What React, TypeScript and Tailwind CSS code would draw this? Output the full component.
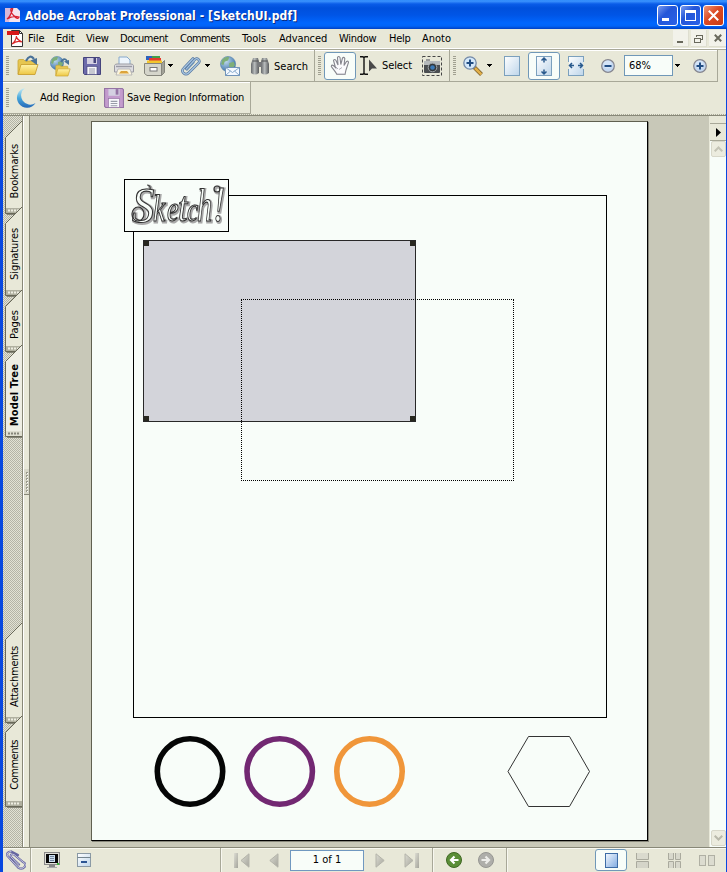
import React from "react";

function Grip() {
  return (
    <svg className="ml-[3px] h-[19px] w-[3px] shrink-0" viewBox="0 0 3 19">
      {[0, 2, 4, 6, 8, 10, 12, 14, 16, 18].map((y) => (
        <rect key={y} x="0" y={y} width="3" height="1" fill="#a09f90" />
      ))}
    </svg>
  );
}

function Down({ className }: { className: string }) {
  return (
    <svg className={"h-[3px] w-[5px] shrink-0 " + className} viewBox="0 0 5 3" shapeRendering="crispEdges">
      <path d="M0 0h5v1h-1v1h-1v1h-1v-1h-1v-1h-1z" fill="#000" />
    </svg>
  );
}

function Folder() {
  return (
    <g>
      <path d="M1 19V6q0-1.500 1.500-1.500h4L8 6h9q1 0 1 1v3" fill="#e6c650" stroke="#c9a436" strokeWidth="0.8" />
      <path d="M1 19.500L4 9.500h17l-3 10z" fill="url(#fold)" stroke="#c9a032" strokeWidth="0.9" />
    </g>
  );
}

function Globe({ x, y }: { x: number; y: number }) {
  return (
    <g transform={`translate(${x} ${y})`}>
      <circle cx="7" cy="7" r="6.600" fill="url(#globe)" stroke="#5d88ad" strokeWidth="0.6" />
      <path d="M2 3q3-3 6-2l-1 3-3 1-1 3-2-1zM8 6l4-1 1 3-3 4-2-2z" fill="#7eae78" />
    </g>
  );
}

function Clip({ className }: { className: string }) {
  return (
    <svg className={"shrink-0 " + className} viewBox="0 0 20 20" fill="none" strokeLinecap="round">
      <path d="M5.500 13L13.500 4Q15.500 1.500 17.500 3.500T17 7.500L7.500 17Q5 19.500 2.500 17T3 12L12 2.500" stroke="#5778a0" strokeWidth="2.600" />
      <path d="M5.500 13L13.500 4Q15.500 1.500 17.500 3.500T17 7.500L7.500 17Q5 19.500 2.500 17T3 12L12 2.500" stroke="#a9c6e2" strokeWidth="1.200" />
      <path d="M6 14L13 6.500" stroke="#6f93b8" strokeWidth="1.400" />
    </svg>
  );
}

function Floppy({ className, body, edge }: { className: string; body: string; edge: string }) {
  return (
    <svg className={"shrink-0 " + className} viewBox="0 0 18 18">
      <path d="M.5.5h16l1 1v16H1.500l-1-1z" fill={body} stroke={edge} />
      <rect x="4" y="1" width="10" height="6" fill="#d4d0e2" />
      <rect x="10.500" y="1" width="2.500" height="5" fill={edge} />
      <rect x="4" y="9.500" width="10" height="8" fill="#f7f7fb" stroke={edge} strokeWidth="0.6" />
      <path d="M6 12h6M6 14h6M6 16h6" stroke="#989ba8" />
    </svg>
  );
}

function ZoomKnob({ plus, className }: { plus?: boolean; className: string }) {
  return (
    <svg className={"h-[14px] w-[14px] shrink-0 " + className} viewBox="0 0 14 14">
      <circle cx="7" cy="7" r="6.300" fill="#c4d8f0" stroke="#85858e" strokeWidth="1.200" />
      <circle cx="6.500" cy="5.500" r="4" fill="#dceafa" opacity="0.7" />
      <path d={plus ? "M3.500 7h7M7 3.500v7" : "M3.500 7h7"} stroke="#214d83" strokeWidth="2" />
    </svg>
  );
}

function PageSheet({ children, className }: { children?: React.ReactNode; className?: string }) {
  return (
    <svg className={"h-[20px] w-[16px] shrink-0 " + (className ?? "")} viewBox="0 0 16 20">
      <rect x=".5" y=".5" width="15" height="19" fill="url(#sheet)" stroke="#7ba0bd" />
      {children}
    </svg>
  );
}

function Defs() {
  return (
    <svg className="absolute h-0 w-0">
      <defs>
        <linearGradient id="fold" x1="0" y1="0" x2="0" y2="1">
          <stop offset="0" stopColor="#fff3a8" />
          <stop offset="1" stopColor="#edc743" />
        </linearGradient>
        <radialGradient id="globe" cx=".35" cy=".3" r=".8">
          <stop offset="0" stopColor="#c2dced" />
          <stop offset="1" stopColor="#2b66a4" />
        </radialGradient>
        <linearGradient id="sheet" x1="0" y1="0" x2="1" y2="1">
          <stop offset="0" stopColor="#ffffff" />
          <stop offset="1" stopColor="#bdd5ea" />
        </linearGradient>
        <linearGradient id="sheetBlue" x1="0" y1="0" x2="1" y2="1">
          <stop offset="0" stopColor="#f4f9ff" />
          <stop offset="1" stopColor="#7faae0" />
        </linearGradient>
        <linearGradient id="moon" x1="0" y1="0" x2="0" y2="1">
          <stop offset="0" stopColor="#c8ecf4" />
          <stop offset=".5" stopColor="#48a8dc" />
          <stop offset="1" stopColor="#2468b8" />
        </linearGradient>
        <linearGradient id="gray" x1="0" y1="0" x2="1" y2="1">
          <stop offset="0" stopColor="#dcdcd2" />
          <stop offset="1" stopColor="#a5a59c" />
        </linearGradient>
        <linearGradient id="bino" x1="0" y1="0" x2="1" y2="0">
          <stop offset="0" stopColor="#66696b" />
          <stop offset=".45" stopColor="#b8bcbc" />
          <stop offset="1" stopColor="#5a5c5e" />
        </linearGradient>
      </defs>
    </svg>
  );
}

function TitleBar() {
  return (
    <div className="flex h-[29px] shrink-0 items-center bg-[linear-gradient(180deg,#2a86f8_0px,#3d95ff_1px,#0a5ce8_4px,#0050dc_8px,#0055e6_15px,#0066fe_23px,#0064f8_26px,#0040c4_29px)] pr-[3px]">
      <svg className="ml-[5px] h-[14px] w-[15px]" viewBox="0 0 15 14">
        <path d="M0 0h12l3 3v11H0z" fill="#f5e4ee" />
        <path d="M0 0h7L4 14H0z" fill="#d8b8d8" />
        <path d="M2 11Q5 9 7 3T6 1Q5 4 9 8T14 9Q8 7 2 11" fill="none" stroke="#d82030" strokeWidth="1.300" />
      </svg>
      <h1 className="ml-[5px] mt-[3px] w-[276px] whitespace-nowrap font-['DejaVu_Sans_Condensed','DejaVu_Sans',sans-serif] text-[12px] font-bold tracking-[0.07px] text-white [font-stretch:condensed] [text-shadow:1px_1px_0_#0a2a80]">
        Adobe Acrobat Professional - [SketchUI.pdf]
      </h1>
      <div className="ml-auto mt-[2px] flex gap-[2px]">
        <div className="h-[21px] w-[21px] rounded-[3px] border border-white bg-[linear-gradient(135deg,#7a9cf0,#2456d8_40%,#2a62e8)]">
          <div className="ml-[4px] mt-[12px] h-[3px] w-[7px] bg-white" />
        </div>
        <div className="h-[21px] w-[21px] rounded-[3px] border border-white bg-[linear-gradient(135deg,#7a9cf0,#2456d8_40%,#2a62e8)]">
          <div className="ml-[4px] mt-[4px] h-[11px] w-[11px] border border-t-[3px] border-white" />
        </div>
        <div className="flex h-[21px] w-[21px] items-center justify-center rounded-[3px] border border-white bg-[linear-gradient(135deg,#f09878,#dc4a24_45%,#c83c14)]">
          <svg className="h-[11px] w-[11px]" viewBox="0 0 11 11">
            <path d="M.8.8l9.400 9.400M10.200.8L.8 10.200" stroke="#fff" strokeWidth="2" />
          </svg>
        </div>
      </div>
    </div>
  );
}

const MENUS: [string, string][] = [
  ["File", "w-[28px]"],
  ["Edit", "w-[30px] tracking-[-0.2px]"],
  ["View", "w-[34px] tracking-[-0.2px]"],
  ["Document", "w-[60px] tracking-[-0.4px]"],
  ["Comments", "w-[62px] tracking-[-0.5px]"],
  ["Tools", "w-[37px]"],
  ["Advanced", "w-[60px] tracking-[-0.1px]"],
  ["Window", "w-[50px] tracking-[-0.3px]"],
  ["Help", "w-[33px] tracking-[-0.3px]"],
  ["Anoto", "w-[40px]"],
];

function MenuBar() {
  return (
    <div className="flex h-[19px] shrink-0 items-center">
      <svg className="ml-[4px] h-[17px] w-[17px] shrink-0" viewBox="0 0 17 17">
        <path d="M4.500.5h8l3 3v13h-11z" fill="#fff" stroke="#333" />
        <path d="M12.500.5v3h3" fill="none" stroke="#333" />
        <rect x="0" y="1" width="12" height="4" fill="#d81818" />
        <path d="M5 14Q9 11 9.500 6Q9 9 15 12Q10 10 5 14" fill="none" stroke="#d82828" strokeWidth="1.200" />
      </svg>
      <div className="ml-[4px] flex">
        {MENUS.map(([m, w]) => (
          <span key={m} className={"whitespace-nowrap " + w}>{m}</span>
        ))}
      </div>
      <div className="ml-auto flex gap-[2px]">
        <div className="h-[17px] w-[16px] border-b border-r border-[#deded0] bg-[#f2f2ea] pl-[4px] pt-[11px]">
          <div className="h-[2px] w-[6px] bg-[#68685c]" />
        </div>
        <div className="flex h-[17px] w-[16px] items-center justify-center border-b border-r border-[#deded0] bg-[#f2f2ea]">
          <svg className="h-[9px] w-[9px]" viewBox="0 0 9 9" fill="none" stroke="#68685c" shapeRendering="crispEdges">
            <path d="M2 1h7M2.500 1v2M8.500 1v5M6 5.500h3" strokeWidth="1" />
            <path d="M0 4h6.500M.5 4v5M6 4v5M0 8.500h6.500" />
          </svg>
        </div>
        <div className="flex h-[17px] w-[17px] items-center justify-center border-b border-[#deded0] bg-[#f2f2ea]">
          <svg className="h-[8px] w-[8px]" viewBox="0 0 8 8">
            <path d="M.8.8l6.400 6.400M7.200.8L.8 7.200" stroke="#68685c" strokeWidth="2" />
          </svg>
        </div>
      </div>
    </div>
  );
}

function MainToolbar() {
  const dock = "flex h-[32px] shrink-0 items-center border-b border-r border-[#a8a898] shadow-[inset_0_1px_0_#fff] ";
  return (
    <div className="flex shrink-0">
      <div className={dock + "w-[312px]"}>
        <Grip />
        <svg className="ml-[8px] h-[22px] w-[22px] shrink-0" viewBox="0 0 22 22">
          <Folder />
          <path d="M9 6Q13-1.500 17 4" fill="none" stroke="#4a7298" strokeWidth="2.200" />
          <path d="M13.500 5.500L20 3v7z" fill="#4a7298" />
        </svg>
        <svg className="ml-[11px] h-[22px] w-[21px] shrink-0" viewBox="0 0 21 22">
          <Globe x={0} y={1} />
          <g transform="translate(5 7) scale(.72)"><Folder /></g>
          <path d="M11 7Q14 2 17 6" fill="none" stroke="#4a7298" strokeWidth="1.800" />
          <path d="M14 6.500L19 5v5z" fill="#4a7298" />
        </svg>
        <Floppy className="ml-[12px] h-[18px] w-[18px]" body="#6d6baa" edge="#45447c" />
        <svg className="ml-[13px] h-[20px] w-[20px] shrink-0" viewBox="0 0 20 20">
          <path d="M5 10V1h8l3 3v6z" fill="#eef5fc" stroke="#86a9cc" />
          <path d="M.5 9.500Q1 8 3 8h14q2 0 2.500 1.500V16H.5z" fill="#dcdce0" stroke="#9a9aa2" />
          <path d="M2 10.500h16" stroke="#9a9aa4" strokeWidth="1.400" />
          <path d="M4 13h12l2 6H2z" fill="#faf5dd" stroke="#a8a8ac" strokeWidth=".7" />
          <path d="M5 17.500l2-2.500h6l2 2.500z" fill="#dca43a" />
        </svg>
        <svg className="ml-[10px] h-[20px] w-[21px] shrink-0" viewBox="0 0 21 20">
          <rect x="2" y="0" width="6" height="4" fill="#2d62bd" />
          <rect x="8" y="0" width="8" height="4" fill="#43a047" />
          <rect x="5" y="2" width="12" height="3" fill="#e33b2e" />
          <rect x="3" y="4.500" width="15" height="3" fill="#f2c62e" />
          <path d="M.5 7.500h17v12H3l-2.500-2z" fill="#d5d5cb" stroke="#85857c" />
          <path d="M17.500 7.500l3-3v12l-3 3z" fill="#a2a298" stroke="#85857c" />
          <rect x="6" y="11.500" width="7" height="3.500" fill="#fff" stroke="#777" />
        </svg>
        <Down className="ml-[3px]" />
        <Clip className="ml-[8px] h-[20px] w-[20px]" />
        <Down className="ml-[4px]" />
        <svg className="ml-[10px] h-[20px] w-[20px] shrink-0" viewBox="0 0 20 20">
          <g transform="scale(1.15)"><Globe x={0} y={0} /></g>
          <rect x="5.500" y="11.500" width="14" height="8" fill="#f4f9ff" stroke="#7193b8" />
          <path d="M5.500 11.500l7 5 7-5M5.500 19.500l5-4.500M19.500 19.500l-5-4.500" fill="none" stroke="#86a9cc" />
        </svg>
        <svg className="ml-[11px] h-[18px] w-[18px] shrink-0" viewBox="0 0 18 18">
          <path d="M2 1h5l1 4v11q-4 3-8 0V7z" fill="url(#bino)" />
          <path d="M11 1h5l2 6v9q-4 3-8 0V5z" fill="url(#bino)" />
          <rect x="7" y="5" width="4" height="5" fill="#77797b" />
          <path d="M1.500 4h6M10.500 4h6" stroke="#505253" />
        </svg>
        <span className="ml-[5px] mt-[2px]">Search</span>
      </div>
      <div className={dock + "w-[135px]"}>
        <Grip />
        <div className="ml-[3px] flex h-[28px] w-[32px] shrink-0 items-center justify-center rounded-[3px] border border-[#7098b8] bg-[#f8fdf9]">
          <svg className="h-[21px] w-[20px]" viewBox="0 0 20 21">
            <path d="M7 19.500C5 16 3 14 1.300 11.500Q1.500 9 4 11L5.500 12.500L3.500 5.500Q4.500 3.500 6 5.500L8 10L7.500 2.500Q8.500.5 10 2.500L10.800 9.500L12.500 3Q14 1.500 14.800 3.500L14 10.500L16.500 6.500Q18.500 5.500 18.500 7.500Q17 12 16 15L15 19.500z" fill="#fbfbfd" stroke="#85858d" strokeWidth="1.100" />
            <path d="M7 19h8M6 12l2 2M9 14.500l3-2" stroke="#b1b1ba" />
          </svg>
        </div>
        <svg className="ml-[4px] h-[19px] w-[17px] shrink-0" viewBox="0 0 17 19">
          <path d="M0 .8h3l1 1 1-1h3M0 18.200h3l1-1 1 1h3M4 2v15" fill="none" stroke="#111" strokeWidth="1.400" />
          <path d="M9 3.500v12l3-3h5z" fill="#484848" />
        </svg>
        <span className="ml-[5px] w-[40px] shrink-0 tracking-[-0.1px]">Select</span>
        <svg className="h-[20px] w-[20px] shrink-0" viewBox="0 0 20 20">
          <rect x=".5" y=".5" width="19" height="19" fill="none" stroke="#444" strokeDasharray="3 2" />
          <rect x="2" y="5" width="16" height="12" rx="1" fill="#4b4e51" />
          <rect x="2" y="5" width="16" height="4" fill="#b5b9bb" />
          <path d="M4 5V3h4v2" fill="#999" />
          <circle cx="10.500" cy="11.500" r="4.300" fill="#34383b" stroke="#a0a6aa" />
          <circle cx="10.500" cy="11.500" r="2.300" fill="#3b79b6" />
        </svg>
      </div>
      <div className={dock + "w-[268px]"}>
        <Grip />
        <svg className="ml-[7px] h-[20px] w-[20px] shrink-0" viewBox="0 0 20 20">
          <path d="M11 11l7.500 7.500" stroke="#7a5d28" strokeWidth="4" />
          <path d="M12 12l6.300 6.300" stroke="#e2b04a" strokeWidth="2.600" />
          <circle cx="7" cy="7" r="6.200" fill="#d4e8fa" stroke="#7489a6" strokeWidth="1.300" />
          <path d="M3.500 7h7M7 3.500v7" stroke="#214d83" strokeWidth="2" />
        </svg>
        <Down className="ml-[4px]" />
        <PageSheet className="ml-[12px]" />
        <div className="ml-[8px] flex h-[28px] w-[32px] shrink-0 items-center justify-center rounded-[3px] border border-[#7098b8] bg-[#f8fdf9]">
          <PageSheet>
            <path d="M8 1.500v5M5.500 4.500L8 2l2.500 2.500M8 18.500v-5M5.500 15.500L8 18l2.500-2.500" fill="none" stroke="#28598c" strokeWidth="1.500" />
          </PageSheet>
        </div>
        <PageSheet className="ml-[8px]">
          <rect x="0" y="6" width="1" height="7" fill="#e8e8d8" />
          <rect x="15" y="6" width="1" height="7" fill="#e8e8d8" />
          <path d="M1 9.500h5M4 7L1.500 9.500 4 12M15 9.500h-5M12 7l2.500 2.500L12 12" fill="none" stroke="#28598c" strokeWidth="1.500" />
        </PageSheet>
        <ZoomKnob className="ml-[17px]" />
        <div className="ml-[9px] flex h-[21px] w-[49px] shrink-0 items-center border border-[#7098b8] bg-[#f8fdf9] pl-[4px]">68%</div>
        <Down className="ml-[2px] mr-px" />
        <ZoomKnob plus className="ml-[12px]" />
      </div>
    </div>
  );
}

function RegionToolbar() {
  return (
    <div className="flex h-[32px] w-[248px] shrink-0 items-center border-b border-r border-[#a8a898] shadow-[inset_0_1px_0_#fff]">
      <Grip />
      <svg className="ml-[7px] h-[20px] w-[21px] shrink-0" viewBox="0 0 21 20">
        <path d="M9 0A10 10 0 1 0 19.500 15A8 8 0 0 1 9 0z" fill="url(#moon)" />
      </svg>
      <span className="ml-[3px] mt-[1px] w-[64px] shrink-0 whitespace-nowrap tracking-[-0.1px]">Add Region</span>
      <Floppy className="h-[20px] w-[20px]" body="#c39bcd" edge="#9473a4" />
      <span className="ml-[3px] mt-[1px] whitespace-nowrap tracking-[-0.2px]">Save Region Information</span>
    </div>
  );
}

function Tab({ label, h, className, textClass, front }: { label: string; h: number; className: string; textClass: string; front?: boolean }) {
  return (
    <div className={"relative flex w-[17px] shrink-0 items-end " + className}>
      <svg className="absolute left-0 top-0 h-full w-full" viewBox={`0 0 17 ${h}`}>
        <path d={`M17 0L.5 16.500V${h - 1.5}H17z`} fill={front ? "#eeeee4" : "#e8e8d8"} />
        <rect x="1" y={h - 7} width="16" height="5" fill={front ? "#deded0" : "#b0b0a0"} />
        <path d={`M3 ${h - 4.5}h12`} stroke={front ? "#85857a" : "#eeeee2"} strokeWidth="2" strokeDasharray="2 1" />
        <path d={`M17 0L.5 16.500V${h - 1.5}H17`} fill="none" stroke="#686858" />
        <path d={`M2 ${h - 0.5}H17`} stroke="#858578" />
      </svg>
      <span className={"relative ml-[3px] rotate-180 whitespace-nowrap leading-[13px] [writing-mode:vertical-rl] " + textClass}>{label}</span>
    </div>
  );
}

function SideTabs() {
  return (
    <div className="flex w-[20px] shrink-0 flex-col border-r border-[#888878] bg-[repeating-conic-gradient(#b4b4a6_0%_25%,#e2e2d4_0%_50%)] bg-size-[2px_2px] pl-[2px] pt-[5px]">
      <Tab label="Bookmarks" h={94} className="h-[94px]" textClass="mb-[17px] tracking-[-0.1px]" />
      <Tab label="Signatures" h={90} className="-mt-[8px] h-[90px]" textClass="mb-[17px] tracking-[-0.1px]" />
      <Tab label="Pages" h={63} className="-mt-[7px] h-[63px]" textClass="mb-[14px]" />
      <Tab label="Model Tree" h={93} className="-mt-[8px] h-[93px]" textClass="mb-[12px] font-bold tracking-[0.1px]" front />
      <Tab label="Attachments" h={101} className="mt-[185px] h-[101px]" textClass="mb-[17px] tracking-[-0.2px]" />
      <Tab label="Comments" h={92} className="-mt-[8px] h-[92px]" textClass="mb-[18px] tracking-[-0.5px]" />
    </div>
  );
}

function Splitter() {
  return (
    <div className="flex w-[7px] shrink-0 flex-col border-l border-r border-l-white border-r-[#888878] bg-[#e8e8d8]">
      <div className="mt-[353px] h-[26px] border-b border-[#888878] bg-[#d8d8c9] pl-[1px] pt-[3px]">
        <svg className="h-[21px] w-[4px]" viewBox="0 0 4 21">
          {[0, 3, 6, 9, 12, 15, 18].map((y) => (
            <g key={y}>
              <rect x="1" y={y} width="2" height="2" fill="#9a9a8c" />
              <rect x="2" y={y + 1} width="1" height="1" fill="#fff" />
            </g>
          ))}
        </svg>
      </div>
    </div>
  );
}

function Handle({ className }: { className: string }) {
  return <div className={"absolute h-[5px] w-[5px] bg-[#282820] " + className} />;
}

const LETTERS: [string, number, number, number, number][] = [
  ["S", 7, 42, 54, 0.9],
  ["k", 28, 41, 42, 0.72],
  ["e", 42, 41, 38, 0.75],
  ["t", 53, 41, 46, 0.8],
  ["c", 62, 41, 36, 0.75],
  ["h", 72, 41, 50, 0.66],
  ["!", 88, 41, 56, 0.7],
];

function Lettering() {
  return (
    <g fontFamily="'Liberation Serif', serif" fontStyle="italic">
      {LETTERS.map(([ch, x, y, size, sx]) => (
        <text key={x} transform={`translate(${x} ${y}) scale(${sx} 1)`} fontSize={size * 0.92}>{ch}</text>
      ))}
      <ellipse cx="13" cy="34" rx="6" ry="7" fill="none" />
      <circle cx="92" cy="9" r="3" fill="none" />
      <path d="M22 5q4 0 3 5" fill="none" />
    </g>
  );
}

function Paper() {
  return (
    <div className="relative ml-[61px] mt-[5px] h-[720px] w-[557px] shrink-0 border border-b-black border-l-[#606050] border-r-black border-t-[#606050] bg-[#f8fdf9] shadow-[1px_1px_0_#88887c]">
      <div className="absolute left-[41px] top-[73px] h-[523px] w-[474px] border border-black" />
      <div className="absolute left-[32px] top-[57px] h-[53px] w-[105px] border border-black bg-[#f8fdf9]">
        <svg className="h-full w-full overflow-visible opacity-[0.99] will-change-transform" viewBox="0 0 103 51">
          <g transform="translate(1 1)" fill="none" stroke="#a8a8a8" strokeWidth="3"><Lettering /></g>
          <g fill="#f8fdf9" stroke="#303030" strokeWidth="1.100"><Lettering /></g>
        </svg>
      </div>
      <div className="absolute left-[51px] top-[118px] h-[182px] w-[273px] border border-[#282828] bg-[#d3d4da]">
        <Handle className="left-0 top-0" />
        <Handle className="right-0 top-0" />
        <Handle className="bottom-0 left-0" />
        <Handle className="bottom-0 right-0" />
      </div>
      <div className="absolute left-[149px] top-[177px] h-[182px] w-[273px] border border-dotted border-black" />
      <svg className="absolute left-[58px] top-[608px] h-[84px] w-[450px]" viewBox="150 730 450 84" fill="none">
        <circle cx="190" cy="771.500" r="32.700" stroke="#050606" strokeWidth="5.600" />
        <circle cx="279.700" cy="771.500" r="32.700" stroke="#722872" strokeWidth="5.600" />
        <circle cx="369.500" cy="771.500" r="32.700" stroke="#f0963a" strokeWidth="5.600" />
        <path d="M508 771.500L528.500 736.500H569.500L589.500 771.500L569.500 806.500H528.500z" stroke="#333" />
      </svg>
    </div>
  );
}

function ScrollBar() {
  const btn = "flex h-[16px] w-[15px] items-center justify-center rounded-[2px] border border-[#d8d8ca] bg-[#ececdf]";
  return (
    <div className="ml-auto flex w-[17px] shrink-0 flex-col items-center border-l border-[#e8e8d8] bg-[#f8fdf9]">
      <div className="h-[8px] w-full border-b border-[#a8a898] bg-[#e8e8d8]" />
      <div className="flex h-[17px] w-full items-center justify-center border-b border-[#a8a898] bg-[#e8e8d8]">
        <svg className="h-[9px] w-[5px]" viewBox="0 0 5 9"><path d="M0 0l5 4.500L0 9z" fill="#000" /></svg>
      </div>
      <div className={btn}>
        <svg className="h-[6px] w-[9px]" viewBox="0 0 9 6"><path d="M.7 5.300l3.800-3.800 3.800 3.800" fill="none" stroke="#c4c4b6" strokeWidth="2" /></svg>
      </div>
      <div className={btn + " mb-[1px] mt-auto"}>
        <svg className="h-[6px] w-[9px]" viewBox="0 0 9 6"><path d="M.7.700l3.800 3.800L8.300.700" fill="none" stroke="#b9b9ab" strokeWidth="2" /></svg>
      </div>
    </div>
  );
}

function Sep({ className }: { className: string }) {
  return <div className={"h-full w-[2px] shrink-0 border-l border-r border-l-[#a8a898] border-r-[#f8f8f0] " + className} />;
}

function StatusBar() {
  return (
    <div className="flex h-[25px] shrink-0 items-center border-t border-[#888878] shadow-[inset_0_1px_0_#f8f8f0]">
      <svg className="ml-[3px] h-[20px] w-[20px] shrink-0" viewBox="0 0 20 20" fill="none" strokeLinecap="round">
        <path d="M12 5L5 1.500Q0 2 1.500 6L12 17.500Q16 20 18.500 17T17 12L8 4.500Q4 3.500 5 7L13 14.500" stroke="#6666a0" strokeWidth="2.200" />
        <path d="M5 1.500Q0 2 1.500 6L12 17.500Q16 20 18.500 17T17 12L8 4.500Q4 3.500 5 7L13 14.500" stroke="#c4c4e0" strokeWidth="1" />
      </svg>
      <Sep className="ml-[4px]" />
      <svg className="ml-[12px] h-[16px] w-[16px] shrink-0" viewBox="0 0 16 16">
        <rect x=".5" y=".5" width="15" height="12" fill="#e0e0d8" stroke="#888" />
        <rect x="2" y="2" width="12" height="9" fill="#080808" />
        <rect x="5" y="3" width="6" height="7" fill="#cce0f0" />
        <path d="M6 4.500h4M6 6.500h4M6 8.500h4" stroke="#7788a0" />
        <rect x="5" y="13" width="6" height="2" fill="#888" /><rect x="3" y="15" width="10" height="1" fill="#aaa" />
        <rect x="13" y="11" width="2" height="2" fill="#3eb43e" />
      </svg>
      <svg className="ml-[17px] h-[14px] w-[14px] shrink-0" viewBox="0 0 14 14">
        <rect x=".5" y=".5" width="13" height="13" fill="url(#sheet)" stroke="#8b9aa5" />
        <path d="M.5 4.500h13" stroke="#74858f" />
        <rect x="4" y="8" width="6" height="2" fill="#2c5593" />
      </svg>
      <Sep className="ml-[129px]" />
      <svg className="ml-[12px] h-[15px] w-[16px] shrink-0" viewBox="0 0 16 15">
        <rect x="0" y="0" width="4" height="15" fill="url(#gray)" />
        <path d="M15 .8L7 7.500l8 6.700z" fill="url(#gray)" stroke="#b4b4aa" />
      </svg>
      <svg className="ml-[19px] h-[15px] w-[10px] shrink-0" viewBox="0 0 10 15"><path d="M9 .8L.8 7.500 9 14.200z" fill="url(#gray)" stroke="#b4b4aa" /></svg>
      <div className="ml-[11px] flex h-[21px] w-[74px] shrink-0 items-center justify-center border border-[#7098c0] bg-[#f8fdf9]">1 of 1</div>
      <svg className="ml-[11px] h-[15px] w-[10px] shrink-0" viewBox="0 0 10 15"><path d="M1 .8l8.200 6.700L1 14.200z" fill="url(#gray)" stroke="#b4b4aa" /></svg>
      <svg className="ml-[19px] h-[15px] w-[16px] shrink-0" viewBox="0 0 16 15">
        <rect x="11" y="0" width="4" height="15" fill="url(#gray)" />
        <path d="M1 .8l8 6.700-8 6.700z" fill="url(#gray)" stroke="#b4b4aa" />
      </svg>
      <Sep className="ml-[12px]" />
      <svg className="ml-[12px] h-[16px] w-[16px] shrink-0" viewBox="0 0 16 16">
        <circle cx="8" cy="8" r="7.500" fill="#5b8e38" stroke="#3f6824" />
        <path d="M12.500 8H6M8.500 4.500L5 8l3.500 3.500" fill="none" stroke="#fff" strokeWidth="2.200" />
      </svg>
      <svg className="ml-[16px] h-[16px] w-[16px] shrink-0" viewBox="0 0 16 16">
        <circle cx="8" cy="8" r="7.500" fill="#aeaeaa" stroke="#969692" />
        <path d="M3.500 8H10M7.500 4.500L11 8l-3.500 3.500" fill="none" stroke="#ededea" strokeWidth="2.200" />
      </svg>
      <Sep className="ml-[12px]" />
      <div className="ml-[87px] flex h-[22px] w-[32px] shrink-0 items-center justify-center rounded-[3px] border border-[#7098b8] bg-[#f8fdf9]">
        <svg className="h-[15px] w-[13px]" viewBox="0 0 13 15"><rect x=".5" y=".5" width="12" height="14" fill="url(#sheetBlue)" stroke="#3d6ca6" /></svg>
      </div>
      <svg className="ml-[9px] h-[15px] w-[13px] shrink-0" viewBox="0 0 13 15">
        <rect x="0" y="0" width="13" height="6" fill="#dadace" /><rect x="0" y="9" width="13" height="6" fill="#d5d5c9" />
        <path d="M.5 0v6.500h12V0M.5 15V8.500h12V15" fill="none" stroke="#aaaa9e" />
      </svg>
      <svg className="ml-[19px] h-[15px] w-[13px] shrink-0" viewBox="0 0 13 15" fill="#d8d8cc" stroke="#aaaa9e">
        <path d="M.5 0v6.500h5V0M7.500 0v6.500h5V0M.5 15V8.500h5V15M7.500 15V8.500h5V15" />
      </svg>
      <svg className="ml-[18px] h-[11px] w-[16px] shrink-0" viewBox="0 0 16 11" fill="#dcdcd0" stroke="#b0b0a4">
        <rect x=".5" y=".5" width="6" height="10" /><rect x="9.500" y=".5" width="6" height="10" />
      </svg>
    </div>
  );
}

export default function App() {
  return (
    <div className="flex h-[872px] w-[727px] flex-col overflow-hidden bg-[#e8e8d8] font-['DejaVu_Sans_Condensed','DejaVu_Sans',sans-serif] text-[11px] leading-[14px] text-black [font-stretch:condensed]">
      <Defs />
      <TitleBar />
      <div className="flex h-[843px] flex-col border-l-[3px] border-r border-l-[#0848e0] border-r-[#0848e0]">
        <MenuBar />
        <div className="h-[2px] shrink-0 border-b border-t border-b-[#a8a898] border-t-white" />
        <MainToolbar />
        <RegionToolbar />
        <div className="h-[2px] shrink-0 border-b border-t border-b-[#888878] border-t-[#a8a898] [border-top-style:dotted]" />
        <div className="flex h-[731px] shrink-0">
          <SideTabs />
          <Splitter />
          <div className="flex min-w-0 grow bg-[#c8c8b8]">
            <Paper />
            <ScrollBar />
          </div>
        </div>
        <StatusBar />
      </div>
    </div>
  );
}
